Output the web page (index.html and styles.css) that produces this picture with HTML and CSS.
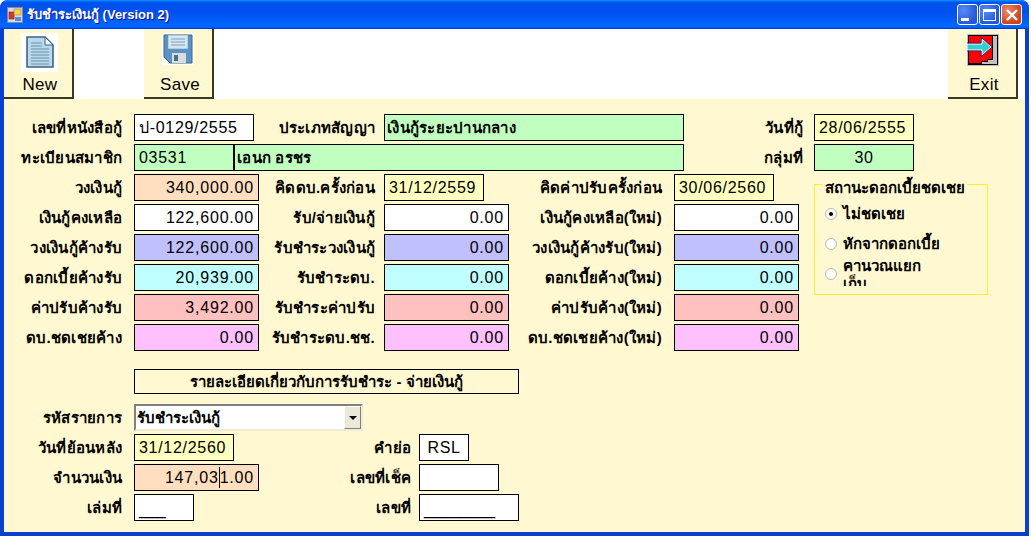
FILE: index.html
```html
<!DOCTYPE html>
<html lang="th">
<head>
    <meta charset="UTF-8">
    <title>รับชำระเงินกู้ (Version 2)</title>
    <link rel="stylesheet" href="styles.css">
</head>
<body>
<div class="window">
    <div class="titlebar">
        <svg class="app-icon" width="16" height="16" viewBox="0 0 16 16">
            <rect x="0.5" y="0.5" width="15" height="15" fill="#d8dce8" stroke="#7f8aa8"/>
            <rect x="2" y="5" width="5" height="7" fill="#d8342c" stroke="#7a1c18" stroke-width="0.6"/>
            <rect x="7" y="2" width="7" height="6" fill="#f4d050" stroke="#a88820" stroke-width="0.6"/>
            <rect x="8" y="10" width="6" height="4" fill="#5c8cd8"/>
        </svg>
        <span class="title-text">รับชำระเงินกู้ (Version 2)</span>
        <div class="win-buttons">
            <div class="win-btn"><span class="glyph-min"></span></div>
            <div class="win-btn"><span class="glyph-max"></span></div>
            <div class="win-btn close">
                <svg width="14" height="14" viewBox="0 0 14 14"><path d="M2 2 L12 12 M12 2 L2 12" stroke="#fff" stroke-width="2.4" fill="none"/></svg>
            </div>
        </div>
    </div>

    <div class="toolbar">
        <div class="tool-btn">
            <svg class="tool-icon icon-new" width="37" height="39" viewBox="0 0 37 39">
                <rect width="37" height="39" fill="#fff"/>
                <path d="M6 4 H24 L32 12 V34 H6 Z" fill="#b8d8ee" stroke="#3f6478" stroke-width="1.6"/>
                <path d="M24 4 V12 H32 Z" fill="#eef6fb" stroke="#3f6478"/>
                <path d="M10 10 H21 M10 13 H21 M10 16 H28 M10 19 H28 M10 22 H28 M10 25 H28 M10 28 H28 M10 31 H28" stroke="#6f93a8" stroke-width="1"/>
            </svg>
            <span>New</span>
        </div>
        <div class="tool-btn">
            <svg class="tool-icon" width="32" height="32" viewBox="0 0 32 32">
                <rect width="32" height="32" fill="#fff"/>
                <path d="M2 2 H30 V30 H8 L2 24 Z" fill="#5b93c4" stroke="#3f6478"/>
                <rect x="6" y="2" width="20" height="14" fill="#d4e6f2" stroke="#6f93a8" stroke-width="0.6"/>
                <path d="M9 6 H23 M9 9 H23 M9 12 H23" stroke="#7fa0b8"/>
                <rect x="10" y="20" width="14" height="10" fill="#d8dde0"/>
                <rect x="12" y="22" width="4" height="6" fill="#4f6c84"/>
            </svg>
            <span>Save</span>
        </div>
        <div class="tool-spacer"></div>
        <div class="tool-btn">
            <svg class="tool-icon icon-exit" width="32" height="32" viewBox="0 0 32 32">
                <rect width="32" height="32" fill="#bdbdbd"/>
                <rect x="1" y="1" width="30" height="30" fill="#000"/>
                <rect x="2" y="2" width="28" height="28" fill="#c0c0c0"/>
                <path d="M2 2 H25 V25 H20 V27 H14 V29 H2 Z" fill="#ff0000"/>
                <path d="M2 29 H14 V27 H20 V25 H25 V2 H26 V26 H21 V28 H15 V30 H2 Z" fill="#000"/>
                <path d="M0 10 H15 V5 L24 13 L15 21 V16 H0 Z" fill="#2fd0d0" stroke="#fff" stroke-width="1"/>
                <path d="M0 9 H14 V3 L25 13 L14 23 V17 H0" fill="none" stroke="#1c2c90" stroke-width="0.8"/>
            </svg>
            <span>Exit</span>
        </div>
    </div>

    <div class="form">
        <div class="row row-first">
            <div class="lbl">เลขที่หนังสือกู้</div>
            <div class="box w120">ป-0129/2555</div>
            <div class="lbl">ประเภทสัญญา</div>
            <div class="box green thai">เงินกู้ระยะปานกลาง</div>
            <div class="lbl pad-date">วันที่กู้</div>
            <div class="box date">28/06/2555</div>
        </div>
        <div class="row row-second">
            <div class="lbl">ทะเบียนสมาชิก</div>
            <div class="box green">03531</div>
            <div class="box green thai">เอนก อรชร</div>
            <div class="lbl pad-date">กลุ่มที่</div>
            <div class="box green center">30</div>
        </div>

        <div class="money-block">
            <div class="money-rows">
                <div class="row row-money">
                    <div class="lbl">วงเงินกู้</div>
                    <div class="box peach num">340,000.00</div>
                    <div class="lbl">คิดดบ.ครั้งก่อน</div>
                    <div class="box date w100">31/12/2559</div>
                    <div class="lbl">คิดค่าปรับครั้งก่อน</div>
                    <div class="box date w100">30/06/2560</div>
                </div>
                <div class="row row-money">
                    <div class="lbl">เงินกู้คงเหลือ</div>
                    <div class="box num">122,600.00</div>
                    <div class="lbl">รับ/จ่ายเงินกู้</div>
                    <div class="box num">0.00</div>
                    <div class="lbl">เงินกู้คงเหลือ(ใหม่)</div>
                    <div class="box num">0.00</div>
                </div>
                <div class="row row-money">
                    <div class="lbl">วงเงินกู้ค้างรับ</div>
                    <div class="box lilac num">122,600.00</div>
                    <div class="lbl">รับชำระวงเงินกู้</div>
                    <div class="box lilac num">0.00</div>
                    <div class="lbl">วงเงินกู้ค้างรับ(ใหม่)</div>
                    <div class="box lilac num">0.00</div>
                </div>
                <div class="row row-money">
                    <div class="lbl">ดอกเบี้ยค้างรับ</div>
                    <div class="box cyan num">20,939.00</div>
                    <div class="lbl">รับชำระดบ.</div>
                    <div class="box cyan num">0.00</div>
                    <div class="lbl">ดอกเบี้ยค้าง(ใหม่)</div>
                    <div class="box cyan num">0.00</div>
                </div>
                <div class="row row-money">
                    <div class="lbl">ค่าปรับค้างรับ</div>
                    <div class="box rose num">3,492.00</div>
                    <div class="lbl">รับชำระค่าปรับ</div>
                    <div class="box rose num">0.00</div>
                    <div class="lbl">ค่าปรับค้าง(ใหม่)</div>
                    <div class="box rose num">0.00</div>
                </div>
                <div class="row row-money">
                    <div class="lbl">ดบ.ชดเชยค้าง</div>
                    <div class="box pink num">0.00</div>
                    <div class="lbl">รับชำระดบ.ชช.</div>
                    <div class="box pink num">0.00</div>
                    <div class="lbl">ดบ.ชดเชยค้าง(ใหม่)</div>
                    <div class="box pink num">0.00</div>
                </div>
            </div>

            <fieldset class="group">
                <legend>สถานะดอกเบี้ยชดเชย</legend>
                <label class="radio"><span class="dot on"></span><span>ไม่ชดเชย</span></label>
                <label class="radio"><span class="dot"></span><span>หักจากดอกเบี้ย</span></label>
                <label class="radio"><span class="dot"></span><span class="clip-text"><span class="clip-inner">คำนวณแยก<br>เก็บ</span></span></label>
            </fieldset>
        </div>

        <div class="section-title">รายละเอียดเกี่ยวกับการรับชำระ - จ่ายเงินกู้</div>

        <div class="row row-bottom">
            <div class="lbl">รหัสรายการ</div>
            <div class="combo">
                <span class="combo-text">รับชำระเงินกู้</span>
                <span class="combo-arrow"></span>
            </div>
        </div>
        <div class="row row-bottom">
            <div class="lbl">วันที่ย้อนหลัง</div>
            <div class="box date w100">31/12/2560</div>
            <div class="lbl">คำย่อ</div>
            <div class="box w50 center">RSL</div>
        </div>
        <div class="row row-bottom">
            <div class="lbl">จำนวนเงิน</div>
            <div class="box peach num w125">147,03<span class="caret"></span>1.00</div>
            <div class="lbl">เลขที่เช็ค</div>
            <div class="box w80"></div>
        </div>
        <div class="row row-bottom">
            <div class="lbl">เล่มที่</div>
            <div class="box w60 under">___</div>
            <div class="lbl">เลขที่</div>
            <div class="box w100 under">________</div>
        </div>
    </div>
</div>
</body>
</html>
```

FILE: styles.css
```css
* {
    box-sizing: border-box;
}

body {
    margin: 0;
    background: #fff;
    font-family: "Liberation Sans", "Noto Sans", sans-serif;
    font-size: 15px;
    color: #000;
}

.window {
    width: 1029px;
    height: 536px;
    display: flex;
    flex-direction: column;
    background: #0b3fd0;
    border-radius: 8px 8px 0 0;
    overflow: hidden;
    padding: 0 4px 4px;
}

/* title bar */
.titlebar {
    height: 29px;
    margin: 0 -4px;
    padding: 0 7px;
    display: flex;
    align-items: center;
    gap: 4px;
    background: linear-gradient(180deg, #0997ff, #0053ee 8%, #0050ee 40%, #06f 88%, #06f 93%, #005bff 95%, #003dd7 96%, #003dd7);
}

.title-text {
    color: #fff;
    font-weight: bold;
    font-size: 13px;
    text-shadow: 1px 1px 0 #0f1089;
}

.win-buttons {
    margin-left: auto;
    display: flex;
    gap: 1px;
}

.win-btn {
    width: 21px;
    height: 21px;
    border: 1px solid #fff;
    border-radius: 3px;
    background: radial-gradient(circle at 30% 30%, #5a8cf5, #2458d8 70%);
    display: flex;
    align-items: center;
    justify-content: center;
}

.win-btn.close {
    background: radial-gradient(circle at 30% 30%, #ec8a68, #d0431c 70%);
}

.glyph-min {
    width: 8px;
    height: 3px;
    background: #fff;
    margin: 9px 5px 0 0;
}

.glyph-max {
    width: 13px;
    height: 12px;
    border: 1px solid #fff;
    border-top-width: 3px;
}

/* toolbar */
.toolbar {
    height: 70px;
    background: #fff;
    display: flex;
    gap: 70px;
}

.tool-spacer {
    flex: 1;
    margin-right: -70px;
}

.tool-btn {
    width: 70px;
    height: 70px;
    flex: none;
    background: #fff8d0;
    border-right: 2px solid #3a3a20;
    border-bottom: 2px solid #3a3a20;
    display: flex;
    flex-direction: column;
    align-items: center;
    font-size: 17px;
    letter-spacing: 0.3px;
    position: relative;
}

.tool-btn:last-child {
    margin-right: 7px;
}

.tool-icon {
    margin-top: 4px;
}

.icon-new {
    margin-left: 2px;
}

.icon-exit {
    margin-top: 5px;
    margin-left: 2px;
}

.tool-btn span {
    position: absolute;
    bottom: 2px;
    margin-left: 4px;
}

/* form */
.form {
    flex: 1;
    background: #fff8d0;
    padding-top: 15px;
}

.row {
    display: grid;
    height: 27px;
    margin-bottom: 3px;
    align-items: center;
}

.row-first {
    grid-template-columns: 130px 125px 125px 300px 130px 100px;
}

.row-second {
    grid-template-columns: 130px 100px 450px 130px 100px;
}

.row-money {
    grid-template-columns: 130px 125px 125px 125px 165px 125px;
}

.row-bottom {
    grid-template-columns: 130px 150px 135px auto;
}

.lbl {
    text-align: right;
    padding-right: 12px;
    font-size: 15px;
    font-weight: bold;
    letter-spacing: 0.25px;
    white-space: nowrap;
}

.row > .lbl:nth-child(3) {
    padding-right: 9px;
}

.row-money > .lbl:nth-child(5) {
    padding-right: 12px;
}

.row-bottom > .lbl:nth-child(3) {
    padding-right: 8px;
}

.pad-date {
    padding-right: 11px;
}

.box {
    height: 27px;
    border: 1px solid #000;
    background: #fff;
    padding: 0 4px;
    font-size: 16px;
    line-height: 25px;
    letter-spacing: 0.7px;
    white-space: nowrap;
    overflow: hidden;
}

.thai {
    font-weight: bold;
    font-size: 15px;
    letter-spacing: 0.25px;
    padding: 0 2px;
}

.num {
    text-align: right;
    letter-spacing: 0.8px;
}

.center {
    text-align: center;
}

.under {
    letter-spacing: 0;
    line-height: 29px;
}

.w50 { width: 50px; }
.w60 { width: 60px; }
.w80 { width: 80px; }
.w100 { width: 100px; }
.w120 { width: 120px; }
.w125 { width: 125px; }

.green { background: #c0ffc0; }
.date { background: #ffffc0; }
.peach { background: #ffdfc0; }
.lilac { background: #c0c0ff; }
.cyan { background: #c0ffff; }
.rose { background: #ffc0c0; }
.pink { background: #ffc0ff; }

.caret {
    display: inline-block;
    width: 1px;
    height: 21px;
    background: #000;
    vertical-align: -5px;
}

/* money rows and the group box beside them */
.money-block {
    display: flex;
    align-items: flex-start;
}

.money-rows {
    width: 795px;
}

.group {
    width: 174px;
    height: 122px;
    margin: -1px 0 0 15px;
    padding: 3px 0 0 10px;
    border: 1px solid #ffee30;
    min-width: 0;
}

.group legend {
    padding: 6px 2px 0;
    margin-left: -2px;
    font-size: 15px;
    line-height: 17px;
    font-weight: bold;
    white-space: nowrap;
}

.radio {
    display: flex;
    align-items: center;
    gap: 6px;
    height: 30px;
    font-size: 15px;
    font-weight: bold;
}

.dot {
    width: 12px;
    height: 12px;
    flex: none;
    border-radius: 50%;
    background: #fff;
    border: 1px solid #b8b8b0;
    display: flex;
    align-items: center;
    justify-content: center;
}

.dot.on::after {
    content: "";
    width: 4px;
    height: 4px;
    border-radius: 50%;
    background: #000;
}

.clip-text {
    display: block;
    width: 105px;
    height: 24px;
    overflow: hidden;
}

.clip-inner {
    display: block;
    margin-top: -5px;
    line-height: 18px;
}

.section-title {
    width: 385px;
    height: 25px;
    margin: 15px 0 10px 130px;
    border: 1px solid #000;
    text-align: center;
    line-height: 23px;
    font-weight: bold;
    font-size: 15px;
}

.combo {
    grid-column: 2 / span 2;
    width: 229px;
    height: 27px;
    background: #fff;
    border: 2px solid;
    border-color: #808080 #f0ecd8 #f0ecd8 #808080;
    display: flex;
    align-items: center;
    justify-content: space-between;
    padding-left: 1px;
}

.combo-text {
    font-weight: bold;
    font-size: 15px;
}

.combo-arrow {
    width: 17px;
    height: 23px;
    background: #ece9d8;
    border: 1px solid;
    border-color: #fff #808080 #808080 #fff;
    display: flex;
    align-items: center;
    justify-content: center;
}

.combo-arrow::after {
    content: "";
    border-left: 4px solid transparent;
    border-right: 4px solid transparent;
    border-top: 4px solid #000;
}
```
